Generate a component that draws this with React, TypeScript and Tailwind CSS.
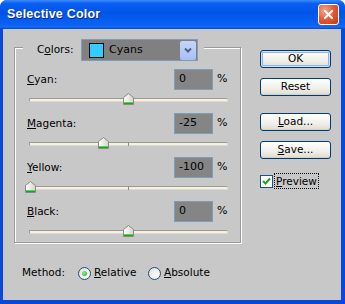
import React from 'react';

const rows = [
    { label: 'Cyan:', key: 'C', rest: 'yan:', value: 0 },
    { label: 'Magenta:', key: 'M', rest: 'agenta:', value: -25 },
    { label: 'Yellow:', key: 'Y', rest: 'ellow:', value: -100 },
    { label: 'Black:', key: 'B', rest: 'lack:', value: 0 },
];

function Thumb({ value }: { value: number }) {
    // centre of the thumb along the 199px track
    const centre = 1 + ((value + 100) / 200) * 196;
    return (
        <svg
            width="11"
            height="12"
            viewBox="0 0 11 12"
            className="absolute top-[3px]"
            style={{ left: centre - 5.5 }}
        >
            <defs>
                <linearGradient id="thumbFill" x1="0" y1="0" x2="1" y2="0">
                    <stop offset="0" stopColor="#ffffff" />
                    <stop offset="1" stopColor="#d6d4c8" />
                </linearGradient>
            </defs>
            <path d="M0.5 4.5 L5.5 0.5 L10.5 4.5 L10.5 11.5 L0.5 11.5 Z" fill="url(#thumbFill)" stroke="#8a8a80" />
            <rect x="1" y="9" width="9" height="1" fill="#58d058" />
            <rect x="1" y="10" width="9" height="1" fill="#21a121" />
        </svg>
    );
}

function SliderRow({ row }: { row: (typeof rows)[number] }) {
    return (
        <div className="h-[44px] pl-[12px]">
            <div className="flex h-[21px] items-center">
                <span className="w-[147px]">
                    <u>{row.key}</u>
                    {row.rest}
                </span>
                <div className="flex h-[21px] w-[39px] items-center border border-[#7f9db9] bg-[#858585] pl-[4px] text-[11px] text-black">
                    {row.value}
                </div>
                <span className="ml-[4px] text-[11px]">%</span>
            </div>
            <div className="relative ml-[2px] flex h-[19px] w-[199px] items-center">
                <div className="h-[4px] w-full rounded-[1px] border border-t-[#9d9b8e] border-l-[#9d9b8e] border-b-[#dcdad0] border-r-[#dcdad0] bg-[#f3f1e4]" />
                <div className="absolute left-[99px] top-[8px] h-[4px] w-px bg-[#8e8c80]" />
                <Thumb value={row.value} />
            </div>
        </div>
    );
}

function XpButton({ children, primary }: { children: React.ReactNode; primary?: boolean }) {
    return (
        <button
            className={
                'flex h-[18px] w-[71px] items-center justify-center rounded-[3px] border border-[#003c74] bg-[linear-gradient(to_bottom,#ffffff,#f0efe8_60%,#dedbd0)] text-black ' +
                (primary ? 'shadow-[inset_0_0_0_1px_#cde0fb,inset_0_0_0_2px_#8fb5ee]' : 'shadow-[inset_0_-1px_0_#d6d0c5]')
            }
        >
            {children}
        </button>
    );
}

function Radio({ checked }: { checked?: boolean }) {
    return (
        <span className="flex h-[13px] w-[13px] items-center justify-center rounded-full border border-[#1c5180] bg-[radial-gradient(circle_at_65%_65%,#ffffff,#dcdcd4)]">
            {checked && <span className="h-[5px] w-[5px] rounded-full bg-[radial-gradient(circle_at_40%_40%,#8ff08f,#18a818)]" />}
        </span>
    );
}

export default function App() {
    return (
        <div className="flex h-[304px] w-[345px] flex-col overflow-hidden rounded-t-[7px] bg-[#0a48dc] font-['DejaVu_Sans',sans-serif] text-[10.5px] text-black">
            {/* title bar */}
            <div className="flex h-[29px] items-center bg-[linear-gradient(to_bottom,#3d8cff_0%,#0a5ef0_12%,#0055e8_45%,#0a62f4_85%,#1a6af2_93%,#0046d8_100%)] pl-[7px] pr-[6px]">
                <span className="font-['Liberation_Sans',sans-serif] text-[12.5px] font-bold tracking-[0.2px] text-white [text-shadow:1px_1px_0_#0b2a8a]">
                    Selective Color
                </span>
                <div className="ml-auto flex h-[21px] w-[21px] items-center justify-center rounded-[3px] border border-white bg-[radial-gradient(circle_at_30%_30%,#f2a58a,#e0532f_55%,#c23a18)]">
                    <svg width="9" height="9" viewBox="0 0 9 9">
                        <path d="M1 1 L8 8 M8 1 L1 8" stroke="#fff" strokeWidth="2" strokeLinecap="square" />
                    </svg>
                </div>
            </div>

            {/* client area */}
            <div className="mb-[4px] ml-[3px] mr-[4px] flex flex-1 bg-[#c8c8c8] pl-[11px] pt-[18px]">
                <div className="flex w-[228px] flex-col">
                    <div className="relative h-[196px] w-[227px] border border-[#9a9a9a] pt-[21px] shadow-[inset_1px_1px_0_#fff,1px_1px_0_#fff]">
                        <div className="absolute left-[8px] top-[-9px] flex h-[22px] items-center bg-[#c8c8c8] pl-[14px] pr-[6px]">
                            <span className="w-[44px]">
                                C<u>o</u>lors:
                            </span>
                            <div className="flex h-[22px] w-[117px] items-center border border-[#7f9db9] bg-[#808080] pl-[7px] pr-px">
                                <span className="h-[15px] w-[15px] border border-black bg-[#33ccff]" />
                                <span className="ml-[5px] text-[11px]">Cyans</span>
                                <span className="ml-auto flex h-[19px] w-[16px] items-center justify-center rounded-[2px] bg-[linear-gradient(to_bottom,#c6d6fa,#a8bff5)]">
                                    <svg width="8" height="5" viewBox="0 0 8 5">
                                        <path d="M1 0.5 L4 3.5 L7 0.5" fill="none" stroke="#4d6185" strokeWidth="2" />
                                    </svg>
                                </span>
                            </div>
                        </div>
                        {rows.map((row) => (
                            <SliderRow key={row.label} row={row} />
                        ))}
                    </div>

                    <div className="mt-[22px] flex h-[16px] items-center pl-[8px]">
                        <span className="w-[56px]">Method:</span>
                        <Radio checked />
                        <span className="ml-[3px] w-[54px]">
                            <u>R</u>elative
                        </span>
                        <Radio />
                        <span className="ml-[3px]">
                            <u>A</u>bsolute
                        </span>
                    </div>
                </div>

                <div className="ml-[18px] flex flex-col pt-[3px]">
                    <XpButton primary>OK</XpButton>
                    <div className="mt-[10px]">
                        <XpButton>Reset</XpButton>
                    </div>
                    <div className="mt-[17px]">
                        <XpButton>
                            <span>
                                <u>L</u>oad...
                            </span>
                        </XpButton>
                    </div>
                    <div className="mt-[10px]">
                        <XpButton>
                            <span>
                                <u>S</u>ave...
                            </span>
                        </XpButton>
                    </div>
                    <div className="mt-[14px] flex items-center">
                        <span className="flex h-[13px] w-[13px] items-center justify-center border border-[#1c5180] bg-white">
                            <svg width="9" height="9" viewBox="0 0 9 9">
                                <path d="M1 4 L3.5 6.5 L8 1.5" fill="none" stroke="#21a121" strokeWidth="2" />
                            </svg>
                        </span>
                        <span className="ml-[1px] border border-dotted border-black px-px leading-[14px]">
                            <u>P</u>review
                        </span>
                    </div>
                </div>
            </div>
        </div>
    );
}
